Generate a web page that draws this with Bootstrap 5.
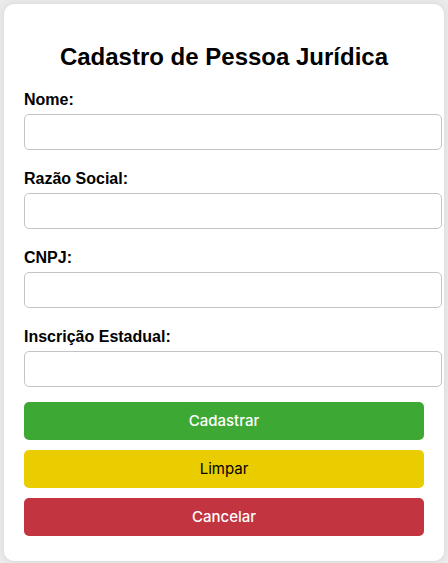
<!DOCTYPE html>
<html lang="pt-BR">
<head>
<meta charset="utf-8">
<meta name="viewport" content="width=device-width, initial-scale=1">
<title>Cadastro de Pessoa Jurídica</title>
<link href="https://cdn.jsdelivr.net/npm/bootstrap@5.3.0/dist/css/bootstrap.min.css" rel="stylesheet">
<style>
body { background: #ececec; font-family: "Liberation Sans", Arial, sans-serif; color: #000; padding: 4px 4px 2px; }
.panel { background: #fff; border-radius: 10px; padding: 39px 20px 25px; box-shadow: 0 0 10px rgba(0,0,0,.1); }
h1 { font-size: 24px; line-height: 28px; margin-bottom: 19px; }
.fields { gap: 19px; margin-bottom: 15px; }
.fields label { font-size: 16px; line-height: 20px; margin-bottom: 4px; }
.fields .form-control { width: calc(100% + 18px); height: 36px; border: 1px solid #c4c4c4; border-radius: 5px; font-size: 16px; }
.actions { gap: 10px; }
.actions .btn { height: 38px; padding: 0; border: 0; border-radius: 5px; font: 500 15px/38px Inter, sans-serif; }
.actions .save { background: #3ea834; color: #fff; }
.actions .clear { background: #eacd00; color: #000; font-weight: 400; }
.actions .cancel { background: #c13440; color: #fff; }
</style>
</head>
<body>
<main class="panel">
<h1 class="text-center fw-bold">Cadastro de Pessoa Jurídica</h1>
<form>
<div class="fields d-flex flex-column">
<div><label class="d-block fw-bold" for="nome">Nome:</label><input class="form-control" type="text" id="nome"></div>
<div><label class="d-block fw-bold" for="razao">Razão Social:</label><input class="form-control" type="text" id="razao"></div>
<div><label class="d-block fw-bold" for="cnpj">CNPJ:</label><input class="form-control" type="text" id="cnpj"></div>
<div><label class="d-block fw-bold" for="inscricao">Inscrição Estadual:</label><input class="form-control" type="text" id="inscricao"></div>
</div>
<div class="d-grid actions">
<button class="btn save" type="submit">Cadastrar</button>
<button class="btn clear" type="reset">Limpar</button>
<button class="btn cancel" type="button">Cancelar</button>
</div>
</form>
</main>
<script src="https://cdn.jsdelivr.net/npm/bootstrap@5.3.0/dist/js/bootstrap.bundle.min.js"></script>
</body>
</html>
